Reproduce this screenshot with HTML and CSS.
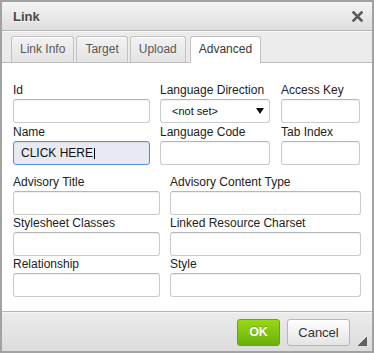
FILE: index.html
```html
<!DOCTYPE html>
<html lang="en">
<head>
  <title>Link</title>
  <link rel="stylesheet" href="styles.css">
</head>
<body>
  <div class="dialog">
    <div class="title">
      <span>Link</span>
      <svg class="close" width="11" height="11" viewBox="0 0 11 11">
        <path d="M1.5 1.5 L9.5 9.5 M9.5 1.5 L1.5 9.5" stroke="#5a5a5a" stroke-width="2.6" stroke-linecap="square"/>
      </svg>
    </div>

    <div class="tabs">
      <div class="tab">Link Info</div>
      <div class="tab">Target</div>
      <div class="tab">Upload</div>
      <div class="tab active">Advanced</div>
    </div>

    <div class="contents">
      <div class="grid three">
        <div class="field">
          <label>Id</label>
          <div class="input"></div>
        </div>
        <div class="field">
          <label>Language Direction</label>
          <div class="input select">
            <span>&lt;not set&gt;</span>
            <svg width="8" height="6" viewBox="0 0 8 6"><path d="M0 0 H8 L4 6 Z" fill="#111"/></svg>
          </div>
        </div>
        <div class="field">
          <label>Access Key</label>
          <div class="input"></div>
        </div>
        <div class="field">
          <label>Name</label>
          <div class="input focus">CLICK HERE<span class="caret"></span></div>
        </div>
        <div class="field">
          <label>Language Code</label>
          <div class="input"></div>
        </div>
        <div class="field">
          <label>Tab Index</label>
          <div class="input"></div>
        </div>
      </div>

      <div class="grid two">
        <div class="field">
          <label>Advisory Title</label>
          <div class="input"></div>
        </div>
        <div class="field">
          <label>Advisory Content Type</label>
          <div class="input"></div>
        </div>
        <div class="field">
          <label>Stylesheet Classes</label>
          <div class="input"></div>
        </div>
        <div class="field">
          <label>Linked Resource Charset</label>
          <div class="input"></div>
        </div>
        <div class="field">
          <label>Relationship</label>
          <div class="input"></div>
        </div>
        <div class="field">
          <label>Style</label>
          <div class="input"></div>
        </div>
      </div>
    </div>

    <div class="footer">
      <div class="button ok">OK</div>
      <div class="button cancel">Cancel</div>
      <div class="grip"></div>
    </div>
  </div>
</body>
</html>
```

FILE: styles.css
```css
body{
  margin: 0;
  font-family: "Liberation Sans", Arial, Helvetica, sans-serif;
  font-size: 12px;
  color: #222;
}

.dialog{
  width: 374px;
  height: 353px;
  box-sizing: border-box;
  border: 2px solid #a2a2a2;
  display: flex;
  flex-direction: column;
  background-color: #FFFFFF;
}

.title{
  height: 28px;
  border-bottom: 1px solid #b3b3b3;
  background: linear-gradient(to bottom, #f4f4f4, #dedede);
  display: flex;
  align-items: center;
  justify-content: space-between;
  padding: 0 9px 0 11px;
  font-size: 13px;
  font-weight: bold;
  color: #474747;
  text-shadow: 0 1px 0 rgba(255,255,255,.75);
}

.close{
  margin-top: 1px;
}

.tabs{
  display: flex;
  gap: 2px;
  padding: 4px 9px 0;
  background-color: #ebebeb;
  border-bottom: 1px solid #bcbcbc;
  border-top: 1px solid #fafafa;
  height: 26px;
}

.tab{
  height: 25px;
  line-height: 25px;
  padding: 0 8px;
  border: 1px solid #c2c2c2;
  border-bottom: none;
  border-radius: 3px 3px 0 0;
  background: linear-gradient(to bottom, #f2f2f2, #e3e3e3);
  color: #595959;
  box-shadow: inset 0 1px 0 #fff;
}

.tab.active{
  background: #FFFFFF;
  color: #383838;
  height: 26px;
  margin-left: 2px;
  margin-bottom: -1px;
}

.contents{
  flex: 1;
  padding: 19px 11px 0;
  border-bottom: 1px solid #b5b5b5;
}

.grid{
  display: grid;
  column-gap: 10px;
  row-gap: 1px;
}

.grid.three{
  grid-template-columns: 137px 110px 80px;
}

.grid.three .field:nth-child(3n){
  margin-left: 1px;
}

.grid.two{
  grid-template-columns: 147px 191px;
  margin-top: 9px;
  row-gap: 0;
}

label{
  display: block;
  line-height: 16px;
  margin-bottom: 1px;
  color: #222;
}

.input{
  height: 24px;
  box-sizing: border-box;
  border: 1px solid #c9cccf;
  border-top-color: #b5b8bb;
  border-radius: 3px;
  background-color: #FFFFFF;
  box-shadow: inset 0 1px 1px rgba(0,0,0,.06);
  display: flex;
  align-items: center;
  padding: 0 7px;
}

.input.focus{
  background-color: #e7e9f3;
  border-color: #4f92d8;
  color: #111;
}

.caret{
  display: inline-block;
  width: 1px;
  height: 11px;
  margin-left: 1px;
  background-color: #000;
}

.input.select{
  justify-content: space-between;
  padding: 0 5px 0 11px;
  font-size: 11px;
  color: #111;
}

.footer{
  height: 39px;
  box-sizing: border-box;
  display: flex;
  justify-content: flex-end;
  align-items: flex-start;
  padding: 6px 5px 0;
  background: linear-gradient(to bottom, #ebebeb, #dcdcdc);
  border-top: 1px solid #f6f6f6;
}

.button{
  height: 27px;
  box-sizing: border-box;
  line-height: 25px;
  border-radius: 3px;
  text-align: center;
  font-size: 13px;
}

.button.ok{
  width: 43px;
  border: 1px solid #6aa40c;
  background: linear-gradient(to bottom, #9ad717, #69b10b);
  color: #FFFFFF;
  font-weight: bold;
  font-size: 12.5px;
  text-shadow: 0 -1px 0 rgba(0,0,0,.2);
}

.button.cancel{
  width: 63px;
  margin-left: 7px;
  border: 1px solid #b6b6b6;
  background: linear-gradient(to bottom, #ffffff, #e4e4e4);
  color: #333;
}

.grip{
  width: 10px;
  height: 9px;
  margin: 18px 0 0 7px;
  background: linear-gradient(to bottom right, transparent 50%, #5f5f5f 50%);
}
```
